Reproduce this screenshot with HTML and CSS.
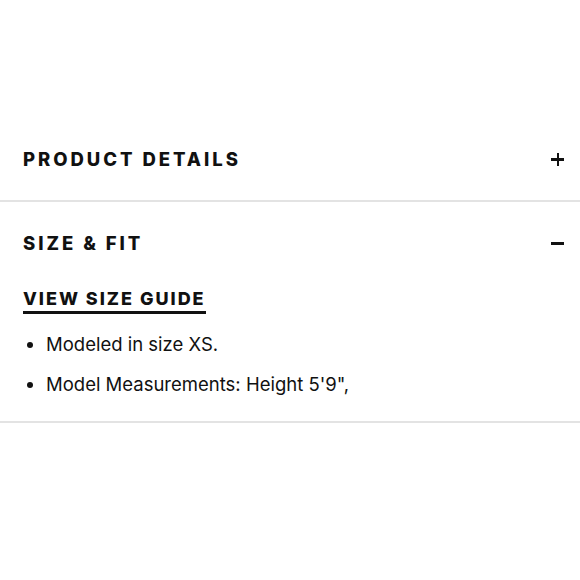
FILE: index.html
```html
<!DOCTYPE html>
<html>
<head>
<meta charset="utf-8">
<link rel="stylesheet" href="styles.css">
</head>
<body>
<div class="accordion">
  <section class="item">
    <div class="header">
      <span class="title">PRODUCT DETAILS</span>
      <span class="icon plus"></span>
    </div>
  </section>
  <section class="item open">
    <div class="header">
      <span class="title">SIZE &amp; FIT</span>
      <span class="icon minus"></span>
    </div>
    <div class="content">
      <a class="guide">VIEW SIZE GUIDE</a>
      <ul class="list">
        <li>Modeled in size XS.</li>
        <li>Model Measurements: Height 5'9",</li>
      </ul>
    </div>
  </section>
</div>
</body>
</html>
```
FILE: styles.css
```css
html, body { margin: 0; padding: 0; background: #fff; }
body { width: 580px; height: 580px; overflow: hidden; color: #111; }
.accordion { padding-top: 118px; }
.item { border-bottom: 2px solid #e3e3e3; }
.header {
  display: flex; align-items: center; justify-content: space-between;
  height: 82px; padding: 0 16px 0 23px;
}
.title {
  font-family: Inter, "Liberation Sans", sans-serif;
  font-weight: 800; font-size: 18.5px; letter-spacing: 0.16em;
  color: #111;
}
.icon { position: relative; width: 13px; height: 13px; display: block; }
.icon::before, .icon::after {
  content: ""; position: absolute; background: #111;
}
.plus::before { left: 0; right: 0; top: 5.5px; height: 2.5px; }
.plus::after { top: 0; bottom: 0; left: 5.5px; width: 2.5px; }
.minus::before { left: 0; right: 0; top: 5px; height: 3px; }
.minus::after { display: none; }
.content { padding: 4px 23px 25px; }
.guide {
  display: inline-block;
  font-family: Inter, "Liberation Sans", sans-serif;
  font-weight: 800; font-size: 18px; letter-spacing: 0.11em;
  color: #111; text-decoration: none;
  border-bottom: 3px solid #111; padding-bottom: 2px;
}
.list {
  margin: 18px 0 0; padding-left: 23px;
  font-family: Inter, "Noto Sans", sans-serif; font-size: 18.5px; color: #111;
}
.list li { line-height: 24px; margin-bottom: 16px; }
.list li:last-child { margin-bottom: 0; }
```
